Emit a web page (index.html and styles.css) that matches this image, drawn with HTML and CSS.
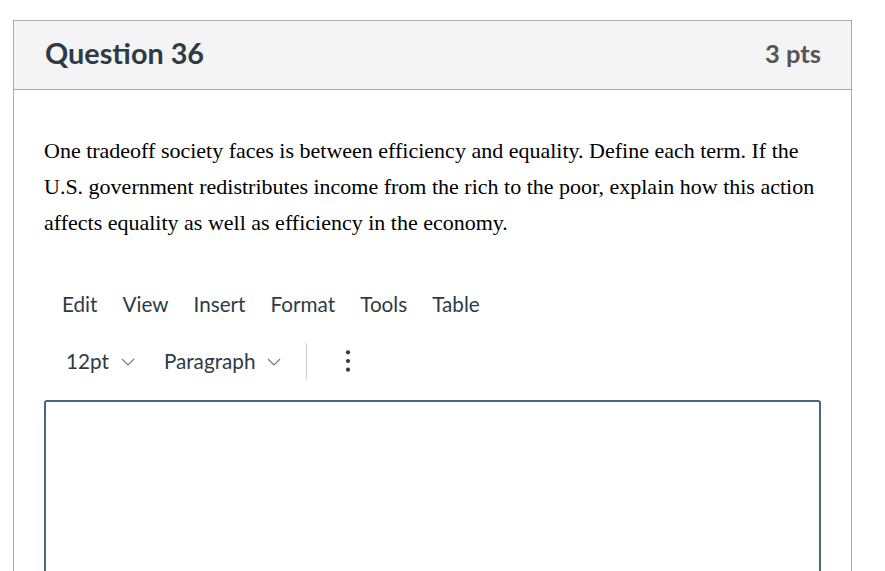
FILE: index.html
```html
<!DOCTYPE html>
<html>
<head>
<meta charset="utf-8">
<link rel="stylesheet" href="styles.css">
</head>
<body>
<div class="card">
  <div class="header">
    <div class="title">Question 36</div>
    <div class="pts">3 pts</div>
  </div>
  <div class="content">
    <p class="question">One tradeoff society faces is between efficiency and equality. Define each term. If the U.S. government redistributes income from the rich to the poor, explain how this action affects equality as well as efficiency in the economy.</p>
    <div class="menubar">
      <span>Edit</span><span>View</span><span>Insert</span><span>Format</span><span>Tools</span><span>Table</span>
    </div>
    <div class="toolbar">
      <span class="dd">12pt <svg class="chev" width="14" height="8" viewBox="0 0 14 8"><path d="M1 1 L7 7 L13 1" fill="none" stroke="#6b7780" stroke-width="1.1"/></svg></span>
      <span class="dd dd2">Paragraph <svg class="chev" width="14" height="8" viewBox="0 0 14 8"><path d="M1 1 L7 7 L13 1" fill="none" stroke="#6b7780" stroke-width="1.1"/></svg></span>
      <span class="sep"></span>
      <span class="more"><svg width="6" height="24" viewBox="0 0 6 24"><circle cx="3" cy="3.3" r="2.1" fill="#2d3b45"/><circle cx="3" cy="12" r="2.1" fill="#2d3b45"/><circle cx="3" cy="20.7" r="2.1" fill="#2d3b45"/></svg></span>
    </div>
    <div class="editor"></div>
  </div>
</div>
</body>
</html>
```
FILE: styles.css
```css
html, body { margin: 0; padding: 0; background: #fff; overflow: hidden; }
body { padding: 20px 0 0 13px; }
.card {
  width: 839px;
  box-sizing: border-box;
  border: 1px solid #aaaaaa;
  border-bottom: none;
  height: 551px;
  overflow: hidden;
}
.header {
  height: 68px;
  box-sizing: border-box;
  background: #f4f4f4;
  border-bottom: 1px solid #aaaaaa;
  display: flex;
  align-items: center;
  justify-content: space-between;
  padding: 0 30px 4px 31px;
  font-family: Lato, sans-serif;
  font-weight: 700;
}
.header { height: 69px; }
.title { font-size: 28.8px; color: #2d3b45; }
.pts { font-size: 25.5px; color: #555; }
.content { padding: 43px 30px 0 30px; }
.question {
  margin: 0;
  font-family: "Liberation Serif", serif;
  font-size: 22px;
  line-height: 36px;
  color: #000;
}
.menubar {
  margin-top: 43px;
  padding-left: 18px;
  display: flex;
  gap: 25px;
  font-family: Lato, sans-serif;
  font-size: 20.7px;
  color: #2d3b45;
  height: 40px;
  align-items: center;
}
.toolbar {
  margin-top: 18px;
  padding-left: 22px;
  display: flex;
  align-items: center;
  height: 38px;
  font-family: Lato, sans-serif;
  font-size: 20.7px;
  color: #2d3b45;
}
.dd { display: flex; align-items: center; gap: 12px; margin-right: 29px; }
.dd2 { margin-right: 25px; }
.chev { margin-top: 2px; }
.sep { width: 1px; height: 36px; background: #c7cdd1; margin-right: 38px; }
.more { display: flex; align-items: center; }
.editor {
  margin-top: 20px;
  width: 777px;
  height: 200px;
  box-sizing: border-box;
  border: 2px solid #47677a;
  border-radius: 3px;
}
```
